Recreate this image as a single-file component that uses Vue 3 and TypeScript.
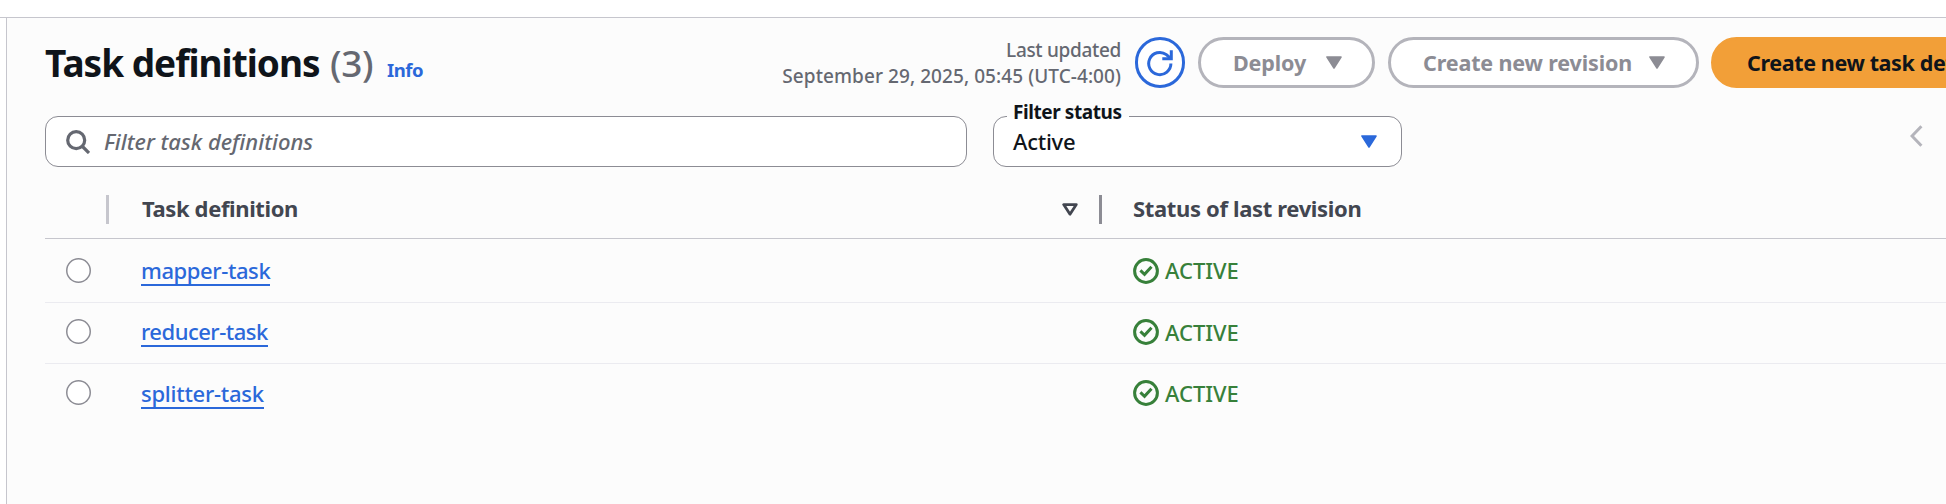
<script setup lang="ts">
import { ref } from 'vue'

interface TaskDefinition {
  name: string
  status: string
}

const tasks: TaskDefinition[] = [
  { name: 'mapper-task', status: 'ACTIVE' },
  { name: 'reducer-task', status: 'ACTIVE' },
  { name: 'splitter-task', status: 'ACTIVE' },
]
const query = ref('')
</script>

<template>
  <div class="page">
    <main class="panel">
      <header class="header">
        <h1 class="title">Task definitions</h1>
        <span class="count">({{ tasks.length }})</span>
        <a class="info">Info</a>
        <div class="actions">
          <div class="updated">
            <span class="updated-label">Last updated</span>
            <span class="updated-time">September 29, 2025, 05:45 (UTC-4:00)</span>
          </div>
          <button class="refresh" aria-label="Refresh">
            <svg width="28" height="28" viewBox="0 0 28 28" fill="none" stroke="currentColor" stroke-width="3">
              <path d="M24.9 14.4A11.1 11.1 0 1 1 20.4 5.6L24.6 9.4" />
              <path d="M25.3 1.3v8.4h-9" />
            </svg>
          </button>
          <button class="btn deploy">
            <span>Deploy</span>
            <svg class="caret" width="16" height="13" viewBox="0 0 16 13"><path d="M1 1h14L8 12z" /></svg>
          </button>
          <button class="btn revision">
            <span>Create new revision</span>
            <svg class="caret" width="16" height="13" viewBox="0 0 16 13"><path d="M1 1h14L8 12z" /></svg>
          </button>
          <button class="btn primary"><span>Create new task definition</span></button>
        </div>
      </header>

      <section class="filters">
        <label class="search">
          <svg width="24" height="24" viewBox="0 0 24 24" fill="none" stroke="currentColor" stroke-width="3.2">
            <circle cx="10.2" cy="10.2" r="8.5" />
            <path d="M16 16l7 7" />
          </svg>
          <input v-model="query" type="text" placeholder="Filter task definitions" />
        </label>
        <div class="select">
          <span class="select-label">Filter status</span>
          <span class="select-value">Active</span>
          <svg class="caret" width="16" height="13" viewBox="0 0 16 13"><path d="M1 1h14L8 12z" /></svg>
        </div>
        <svg class="prev" width="13" height="22" viewBox="0 0 13 22" fill="none" stroke="currentColor" stroke-width="3">
          <path d="M11.4 1.2L2 11l9.4 9.8" />
        </svg>
      </section>

      <section class="table">
        <div class="row head">
          <div class="cell pick"></div>
          <div class="cell name">
            <span class="th-name">Task definition</span>
            <svg width="16" height="13" viewBox="0 0 16 13" fill="none" stroke="currentColor" stroke-width="2.8" stroke-linejoin="round">
              <path d="M1.7 1.6h12.6L8 11.2z" />
            </svg>
          </div>
          <div class="cell status"><span class="th-status">Status of last revision</span></div>
        </div>
        <div v-for="task in tasks" :key="task.name" class="row body">
          <div class="cell pick"><span class="radio"></span></div>
          <div class="cell name"><a class="link">{{ task.name }}</a></div>
          <div class="cell status ok">
            <svg width="26" height="26" viewBox="0 0 26 26" fill="none" stroke="currentColor" stroke-width="3">
              <circle cx="13" cy="13" r="11.4" />
              <path d="M7.4 12.4l4.1 3.9 7-7.6" />
            </svg>
            <span>{{ task.status }}</span>
          </div>
        </div>
      </section>
    </main>
  </div>
</template>

<style>
body {
  background: #fff;
  overflow: hidden;
}
</style>

<style scoped>
* {
  box-sizing: border-box;
}
.page {
  width: 1946px;
  height: 504px;
  padding-top: 17px;
  overflow: hidden;
  font-family: "Noto Sans", sans-serif;
  font-size: 22px;
  color: #0f141a;
  background: linear-gradient(#c6c6cd, #c6c6cd) 0 17px / 100% 1px no-repeat #fff;
}
.panel {
  height: 486px;
  margin: 1px 0 0 6px;
  padding: 19px 0 0 38px;
  border-left: 1px solid #c6c6cd;
  background: #fcfcfc;
}
.header {
  display: flex;
  align-items: baseline;
  height: 51px;
  white-space: nowrap;
}
.title,
.count {
  margin: 0;
  font-size: 37px;
  line-height: 51px;
}
.title {
  width: 285px;
  font-weight: 700;
  letter-spacing: -1px;
}
.count {
  width: 57px;
  font-weight: 500;
  letter-spacing: -0.3px;
  color: #656871;
}
.info {
  font-size: 18.5px;
  font-weight: 700;
  letter-spacing: -0.5px;
  color: #2b68da;
}
.actions {
  display: flex;
  align-self: flex-start;
  flex: none;
  margin-left: auto;
  margin-right: -84px;
}
.updated {
  display: flex;
  flex-direction: column;
  align-items: flex-end;
  margin-right: 14px;
  font-size: 19px;
  font-weight: 500;
  line-height: 26px;
  color: #656871;
}
.updated-label {
  letter-spacing: -0.32px;
}
.updated-time {
  letter-spacing: 0.07px;
}
button {
  height: 51px;
  padding: 0;
  font-family: inherit;
  background: #fff;
}
.refresh {
  display: flex;
  align-items: center;
  justify-content: center;
  width: 50px;
  margin-right: 13px;
  border: 3px solid #2b68da;
  border-radius: 26px;
  color: #2b68da;
}
.btn {
  display: flex;
  align-items: center;
  justify-content: space-between;
  padding: 0 30px 0 32px;
  border: 3px solid #b4b4bb;
  border-radius: 26px;
  font-size: 21.5px;
  font-weight: 700;
  letter-spacing: -0.14px;
  color: #8c8c94;
}
.deploy {
  width: 177px;
  margin-right: 13px;
}
.revision {
  width: 311px;
  margin-right: 12px;
  padding-right: 31px;
}
.primary {
  width: 319px;
  padding-left: 33px;
  border-color: #f29f38;
  background: #f29f38;
  letter-spacing: -0.38px;
  color: #0f141a;
}
.caret {
  fill: currentColor;
  stroke: currentColor;
  stroke-width: 1.6;
  stroke-linejoin: round;
}
.deploy .caret,
.revision .caret {
  margin-bottom: 1px;
}
.filters {
  display: flex;
  margin-top: 28px;
}
.search,
.select {
  display: flex;
  align-items: center;
  height: 51px;
  border: 1px solid #8c8c94;
  border-radius: 13px;
  background: #fff;
}
.search {
  width: 922px;
  padding-left: 20px;
  color: #656871;
}
.search input {
  flex: 1;
  height: 30px;
  margin: 0 0 2px 14px;
  padding: 0;
  border: 0;
  outline: 0;
  background: none;
  font: italic 500 22px "Noto Sans", sans-serif;
}
.search input::placeholder {
  color: #656871;
  letter-spacing: 0;
  opacity: 1;
}
.select {
  position: relative;
  justify-content: space-between;
  width: 409px;
  margin-left: 26px;
  padding: 0 24px 0 19px;
}
.select-value {
  margin-bottom: 2px;
  font-weight: 500;
  letter-spacing: -0.25px;
}
.select .caret {
  color: #2b68da;
}
.select-label {
  position: absolute;
  top: -18px;
  left: 13px;
  padding: 0 7px 0 6px;
  font-size: 19px;
  font-weight: 700;
  line-height: 26px;
  letter-spacing: -0.42px;
  background: linear-gradient(#fcfcfc 18px, #fff 18px);
}
.prev {
  margin: 9px 23px 0 auto;
  color: #b4b4bb;
}
.row {
  display: flex;
  border-bottom: 1px solid #ebebf0;
}
.row:last-child {
  border-color: transparent;
}
.cell {
  display: flex;
  align-items: center;
}
.pick {
  width: 64px;
  padding-left: 21px;
}
.name {
  width: 993px;
  padding-left: 32px;
}
.status {
  padding-left: 31px;
}
.head {
  height: 72px;
  padding-top: 28px;
  border-color: #c6c6cd;
  font-weight: 700;
  color: #424650;
}
.head .cell {
  height: 29px;
}
.head .pick {
  border-right: 3px solid #c6c6cd;
}
.head .name {
  justify-content: space-between;
  padding-left: 33px;
  padding-right: 21px;
  border-right: 3px solid #8c8c94;
}
.th-name,
.th-status {
  margin-bottom: 4px;
}
.th-name {
  letter-spacing: -0.38px;
}
.th-status {
  letter-spacing: -0.35px;
}
.body {
  height: 61px;
}
.body .cell {
  padding-bottom: 2px;
}
.body .pick {
  padding-bottom: 3px;
}
.head + .body {
  height: 64px;
}
.head + .body .cell {
  padding-bottom: 0;
}
.body:last-child .name {
  padding-bottom: 0;
}
.radio {
  width: 25px;
  height: 25px;
  border-radius: 50%;
  background: #fff;
  box-shadow: inset 0 0 0 1.5px #8c8c94;
}
.link {
  border-bottom: 2px solid #2b68da;
  font-weight: 500;
  line-height: 28px;
  letter-spacing: -0.4px;
  color: #2b68da;
}
.body:nth-child(3) .link {
  letter-spacing: -0.5px;
}
.body:last-child .link {
  letter-spacing: -0.25px;
}
.ok {
  gap: 6px;
  font-weight: 500;
  letter-spacing: 0;
  color: #37803a;
}
.ok span {
  margin-bottom: 1px;
}
</style>
